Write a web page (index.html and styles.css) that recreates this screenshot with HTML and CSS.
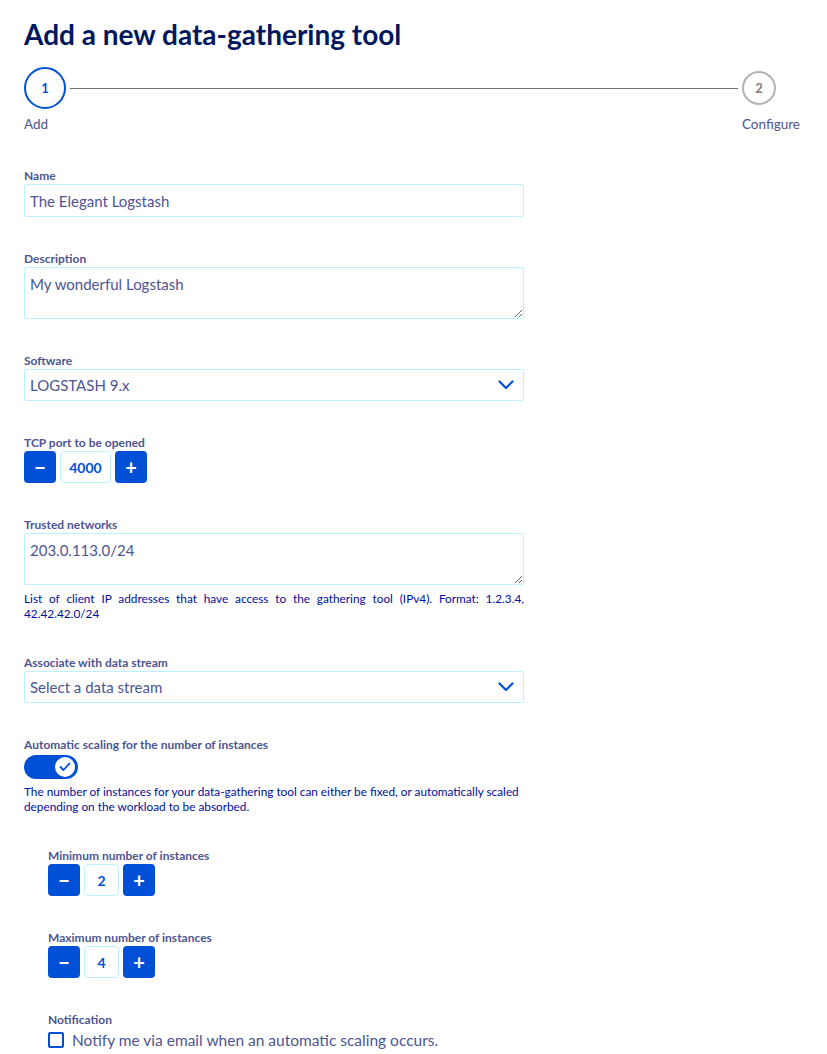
FILE: index.html
```html
<!DOCTYPE html>
<html lang="en">
<head>
  <meta charset="UTF-8" />
  <title>Add a new data-gathering tool</title>
  <link rel="stylesheet" href="styles.css">
</head>
<body>
  <div class="page">
    <h1 class="title">Add a new data-gathering tool</h1>

    <div class="stepper">
      <div class="step">
        <div class="circle active">1</div>
        <div class="step-label">Add</div>
      </div>
      <div class="step-line"></div>
      <div class="step last">
        <div class="circle">2</div>
        <div class="step-label">Configure</div>
      </div>
    </div>

    <form class="form">
      <div class="field">
        <label class="label">Name</label>
        <input class="input" type="text" value="The Elegant Logstash">
      </div>

      <div class="field">
        <label class="label">Description</label>
        <textarea class="textarea">My wonderful Logstash</textarea>
      </div>

      <div class="field">
        <label class="label">Software</label>
        <div class="select">
          <span>LOGSTASH 9.x</span>
          <svg width="16" height="10" viewBox="0 0 16 10"><path d="M1.5 1.5 L8 8 L14.5 1.5" fill="none" stroke="#0050d7" stroke-width="2.2" stroke-linecap="round" stroke-linejoin="round"/></svg>
        </div>
      </div>

      <div class="field">
        <label class="label">TCP port to be opened</label>
        <div class="qty">
          <button type="button" class="qty-btn">&minus;</button>
          <div class="qty-val wide">4000</div>
          <button type="button" class="qty-btn">+</button>
        </div>
      </div>

      <div class="field">
        <label class="label">Trusted networks</label>
        <textarea class="textarea">203.0.113.0/24</textarea>
        <p class="helper justify">List of client IP addresses that have access to the gathering tool (IPv4). Format: 1.2.3.4, 42.42.42.0/24</p>
      </div>

      <div class="field">
        <label class="label">Associate with data stream</label>
        <div class="select">
          <span>Select a data stream</span>
          <svg width="16" height="10" viewBox="0 0 16 10"><path d="M1.5 1.5 L8 8 L14.5 1.5" fill="none" stroke="#0050d7" stroke-width="2.2" stroke-linecap="round" stroke-linejoin="round"/></svg>
        </div>
      </div>

      <div class="field">
        <label class="label">Automatic scaling for the number of instances</label>
        <div class="toggle">
          <div class="knob">
            <svg width="12" height="10" viewBox="0 0 12 10"><path d="M1.5 5 L4.5 8 L10.5 1.5" fill="none" stroke="#0050d7" stroke-width="1.8" stroke-linecap="round" stroke-linejoin="round"/></svg>
          </div>
        </div>
        <p class="helper scaling">The number of instances for your data-gathering tool can either be fixed, or automatically scaled depending on the workload to be absorbed.</p>
      </div>

      <div class="nested">
        <div class="field">
          <label class="label">Minimum number of instances</label>
          <div class="qty">
            <button type="button" class="qty-btn">&minus;</button>
            <div class="qty-val">2</div>
            <button type="button" class="qty-btn">+</button>
          </div>
        </div>

        <div class="field">
          <label class="label">Maximum number of instances</label>
          <div class="qty">
            <button type="button" class="qty-btn">&minus;</button>
            <div class="qty-val">4</div>
            <button type="button" class="qty-btn">+</button>
          </div>
        </div>

        <div class="field">
          <label class="label">Notification</label>
          <div class="check-row">
            <span class="checkbox"></span>
            <span class="check-text">Notify me via email when an automatic scaling occurs.</span>
          </div>
        </div>
      </div>
    </form>
  </div>
</body>
</html>
```

FILE: styles.css
```css
body {
  margin: 0;
  font-family: 'Lato', 'Noto Sans', sans-serif;
  color: #4d5592;
  background: #fff;
}

.page {
  padding: 16px 24px 0 24px;
}

.title {
  margin: 0;
  font-size: 28px;
  line-height: 36px;
  font-weight: 700;
  color: #00185e;
}

/* stepper */
.stepper {
  display: flex;
  align-items: flex-start;
  margin-top: 15px;
}

.step {
  display: flex;
  flex-direction: column;
  align-items: flex-start;
}

.circle {
  width: 38px;
  height: 38px;
  border: 2px solid #b3b3b3;
  border-radius: 50%;
  display: flex;
  align-items: center;
  justify-content: center;
  font-size: 13px;
  font-weight: 700;
  color: #808080;
}

.circle.active {
  border-color: #0050d7;
  color: #0050d7;
}

.step.last {
  margin-right: 3px;
}

.step.last .circle {
  width: 30px;
  height: 30px;
  margin-top: 4px;
}

.step-label {
  margin-top: 7px;
  font-size: 13.5px;
  line-height: 16px;
}

.step.last .step-label {
  margin-top: 11px;
}

.step-line {
  flex: 1;
  height: 1px;
  background: #707070;
  margin: 21px 4px 0 4px;
}

/* form */
.form {
  margin-top: 36px;
  width: 500px;
}

.field {
  margin-bottom: 34px;
}

.label {
  display: block;
  font-size: 12px;
  line-height: 16px;
  font-weight: 700;
  color: #4d5592;
}

.input,
.textarea,
.select {
  display: block;
  box-sizing: border-box;
  width: 500px;
  border: 1px solid #bef1ff;
  border-radius: 2px;
  font-family: inherit;
  font-size: 15px;
  color: #4d5592;
  background: #fff;
  padding: 0 5px;
  margin: 0;
}

.input {
  height: 33px;
}

.textarea {
  height: 52px;
  padding-top: 6px;
  line-height: 20px;
  resize: vertical;
}

.select {
  height: 32px;
  display: flex;
  align-items: center;
  justify-content: space-between;
  padding-right: 9px;
}

.helper {
  margin: 6px 0 0 0;
  font-size: 11.8px;
  line-height: 15px;
  color: #000e9c;
}

.justify {
  text-align: justify;
}

.helper.scaling {
  margin-top: 5px;
}

/* quantity */
.qty {
  display: flex;
  gap: 4px;
}

.qty-btn {
  width: 32px;
  height: 32px;
  border: none;
  border-radius: 4px;
  background: #0050d7;
  color: #fff;
  font-family: inherit;
  font-size: 20px;
  font-weight: 700;
  padding: 0;
  line-height: 32px;
}

.qty-val {
  box-sizing: border-box;
  width: 35px;
  height: 32px;
  border: 1px solid #bef1ff;
  border-radius: 4px;
  display: flex;
  align-items: center;
  justify-content: center;
  font-size: 14px;
  font-weight: 700;
  color: #0050d7;
}

.qty-val.wide {
  width: 51px;
}

/* toggle */
.toggle {
  width: 54px;
  height: 24px;
  margin-top: 2px;
  border-radius: 12px;
  background: #0050d7;
  display: flex;
  align-items: center;
  justify-content: flex-end;
  padding-right: 3px;
  box-sizing: border-box;
}

.knob {
  width: 20px;
  height: 20px;
  border-radius: 50%;
  background: #fff;
  display: flex;
  align-items: center;
  justify-content: center;
}

/* nested */
.nested {
  padding-left: 24px;
}

.check-row {
  display: flex;
  align-items: center;
  gap: 8px;
  margin-top: 3px;
}

.checkbox {
  width: 16px;
  height: 16px;
  box-sizing: border-box;
  border: 2px solid #0050d7;
  border-radius: 2px;
}

.check-text {
  font-size: 15.5px;
  color: #4d5592;
}
```
